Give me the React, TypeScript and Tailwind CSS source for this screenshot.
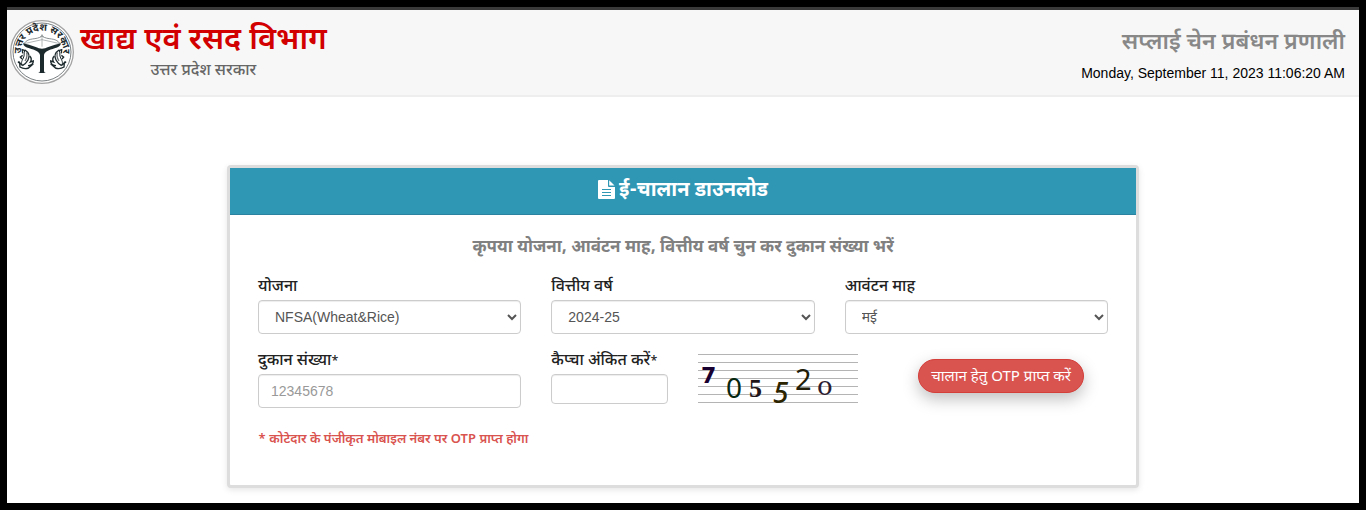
import { useState } from 'react';
import type { ReactNode } from 'react';

interface FieldProps {
  id: string;
  label: string;
  required?: boolean;
  children: ReactNode;
}

interface SelectFieldProps {
  id: string;
  label: string;
  options: string[];
}

const controlClass =
  "block w-full rounded border border-[#ccc] bg-white px-3 text-sm text-[#555] shadow-[inset_0_1px_1px_rgba(0,0,0,0.075)] placeholder:text-[#999] font-['Liberation_Sans','Noto_Sans_Devanagari',sans-serif]";

function Field({ id, label, required, children }: FieldProps) {
  return (
    <div>
      <label htmlFor={id} className="block pt-1 text-base leading-6 font-medium text-[#222]">
        {label}
        {required && <span className="text-xs">*</span>}
      </label>
      {children}
    </div>
  );
}

function SelectField({ id, label, options }: SelectFieldProps) {
  return (
    <Field id={id} label={label}>
      <select id={id} className={`${controlClass} h-[34px]`}>
        {options.map((option) => (
          <option key={option}>{option}</option>
        ))}
      </select>
    </Field>
  );
}

function FileIcon() {
  return (
    <svg viewBox="0 0 17 19" className="h-[19px] w-[17px]" fill="currentColor" aria-hidden="true">
      <path d="M1 0h9v6q0 1 1 1h6v11q0 1-1 1H1q-1 0-1-1V1q0-1 1-1zm3 9v1h9V9zm0 3v1h9v-1zm0 3v1h9v-1z" fillRule="evenodd" />
      <path d="M11.200 0.200l5.300 5.300h-5.300z" />
    </svg>
  );
}

function Fish() {
  return (
    <g fill="none" stroke="#1d2a2d">
      <path d="M45 90c11 7 15 18 9 30-4 8-10 13-17 17" strokeWidth="4" />
      <path d="M45 90c-5 9 0 15-5 24-4 8-8 14-3 23" strokeWidth="3" />
      <path d="M50 97c2 9 1 17-5 26" strokeWidth="4" stroke="#6b7173" />
      <path d="M46 92l-9-3 1 11M38 106l-7 5 5 6M37 136l-8-8 1 13c8 5 17 6 26 3l10-9-12 2" strokeWidth="4" />
      <path d="M59 108c5 5 6 12 2 18l9-3c0 8-5 13-14 15" strokeWidth="4" />
    </g>
  );
}

function StateEmblem() {
  return (
    <svg viewBox="0 0 192 192" className="size-16 shrink-0" role="img" aria-label="उत्तर प्रदेश सरकार">
      <defs>
        <path id="emblem-arc" d="M36 114A63 63 0 1 1 156 114" />
      </defs>
      <circle cx="96" cy="96" r="94" fill="#fff" stroke="#a3a3a3" strokeWidth="4" />
      <circle cx="96" cy="96" r="87" fill="none" stroke="#7a8082" strokeWidth="3" />
      <text className="font-['Noto_Sans_Devanagari','Noto_Sans',sans-serif] font-bold" fontSize="30" fill="#1d2a2d" textAnchor="middle">
        <textPath href="#emblem-arc" startOffset="50%">
          उत्तर प्रदेश सरकार
        </textPath>
      </text>
      <path d="M42 71C56 50 78 62 96 48c18 14 40 2 54 23" fill="none" stroke="#8b9193" strokeWidth="3" />
      <path d="M42 71l54-12 54 12M96 44v36M91 52l5-8 5 8" fill="none" stroke="#8b9193" strokeWidth="2" />
      <path d="M39 70c12 3 24 6 36 10 9 3 15 6 21 6s12-3 21-6c12-4 24-7 36-10-2 9-8 12-19 15-17 5-30 10-32 20v47c0 5 3 6 6 7H84c3-1 6-2 6-7v-47c-2-10-15-15-32-20-11-3-17-6-19-15z" fill="#1d2a2d" />
      <Fish />
      <g transform="matrix(-1 0 0 1 192 0)">
        <Fish />
      </g>
      <circle cx="26" cy="127" r="3" fill="#1d2a2d" />
      <circle cx="166" cy="127" r="3" fill="#1d2a2d" />
    </svg>
  );
}

function Captcha() {
  return (
    <svg viewBox="0 0 160 52" className="h-[52px] w-40 shrink-0 overflow-visible" role="img" aria-label="कैप्चा">
      <path d="M0 .5h160M0 8.5h160M0 16.5h160M0 24.5h160M0 32.5h160M0 40.5h160M0 48.5h160" stroke="#b4b4b4" />
      <text x="3" y="29" fontSize="22" fill="#180030" className="font-['DejaVu_Sans'] font-bold">7</text>
      <text x="28" y="44" fontSize="28" fill="#06280f" className="font-['Noto_Sans']">0</text>
      <text x="51" y="43" fontSize="26" fill="#1f1418" className="font-['Liberation_Serif'] font-bold">5</text>
      <text x="75" y="49" fontSize="28" fill="#2c2400" className="font-['Noto_Sans'] font-medium italic">5</text>
      <text x="97" y="36" fontSize="29" fill="#201c08" className="font-['Noto_Sans']">2</text>
      <text x="119" y="41" fontSize="26" fill="#2c1c30" className="font-['DejaVu_Serif']">o</text>
    </svg>
  );
}

export default function App() {
  const [shopNumber, setShopNumber] = useState('');
  const [captcha, setCaptcha] = useState('');

  return (
    <div className="min-h-screen border-7 border-black bg-white font-['Noto_Sans_Devanagari','Noto_Sans',sans-serif]">
      {/* Header */}
      <header className="flex items-start justify-between border-t-3 border-b-2 border-t-[#3a3a3a] border-b-[#eee] bg-[#f7f7f7] pr-3.5 pl-[3px]">
        <div className="flex items-start gap-1.5 pt-2.5 pb-[11px]">
          <StateEmblem />
          <div className="pt-1 text-center">
            <h1 className="text-[31px] leading-9 font-semibold text-[#d20000]">खाद्य एवं रसद विभाग</h1>
            <p className="text-base leading-6 font-medium text-[#666]">उत्तर प्रदेश सरकार</p>
          </div>
        </div>
        <div className="pt-[15px] text-right">
          <h2 className="text-[23px] leading-9 font-semibold text-[#888]">सप्लाई चेन प्रबंधन प्रणाली</h2>
          <p className="font-['Liberation_Sans',sans-serif] text-sm leading-6 text-black">Monday, September 11, 2023 11:06:20 AM</p>
        </div>
      </header>

      {/* E-challan form */}
      <main className="mx-auto mt-[68px] w-full max-w-[912px] rounded-sm border-3 border-[#ddd] bg-white shadow-[0_2px_6px_rgba(0,0,0,0.1)]">
        <div className="flex h-[47px] items-center justify-center gap-1 border-b border-[#2a82a0] bg-[#2f96b4] pb-1 text-white">
          <FileIcon />
          <h3 className="pt-1 text-xl font-bold">ई-चालान डाउनलोड</h3>
        </div>

        <form className="px-7 pt-[19px] pb-[33px]" onSubmit={(e) => e.preventDefault()}>
          <p className="mb-2.5 text-center text-[17px] leading-7 font-bold text-[#808080]">
            कृपया योजना, आवंटन माह, वित्तीय वर्ष चुन कर दुकान संख्या भरें
          </p>

          <div className="grid grid-cols-3 gap-x-[30px] gap-y-3">
            <SelectField id="scheme" label="योजना" options={['NFSA(Wheat&Rice)']} />
            <SelectField id="year" label="वित्तीय वर्ष" options={['2024-25']} />
            <SelectField id="month" label="आवंटन माह" options={['मई']} />

            <Field id="shop" label="दुकान संख्या" required>
              <input
                id="shop"
                type="text"
                placeholder="12345678"
                value={shopNumber}
                onChange={(e) => setShopNumber(e.target.value)}
                className={`${controlClass} h-[34px]`}
              />
            </Field>

            <div className="col-span-2 flex items-start">
              <div className="w-[117px]">
                <Field id="captcha" label="कैप्चा अंकित करें" required>
                  <input
                    id="captcha"
                    type="text"
                    value={captcha}
                    onChange={(e) => setCaptcha(e.target.value)}
                    className={`${controlClass} h-[30px]`}
                  />
                </Field>
              </div>
              <div className="ml-[30px] pt-2">
                <Captcha />
              </div>
              <button
                type="submit"
                className="mt-[13px] mr-6 ml-auto h-[34px] rounded-full border border-[#d43f3a] bg-[#d9534f] px-3 pt-1 text-[15px] leading-6 whitespace-nowrap text-white shadow-[0_6px_16px_rgba(0,0,0,0.25)]"
              >
                चालान हेतु OTP प्राप्त करें
              </button>
            </div>
          </div>

          <p className="mt-5 text-[13px] leading-6 font-semibold text-[#d9534f]">
            * कोटेदार के पंजीकृत मोबाइल नंबर पर OTP प्राप्त होगा
          </p>
        </form>
      </main>
    </div>
  );
}
